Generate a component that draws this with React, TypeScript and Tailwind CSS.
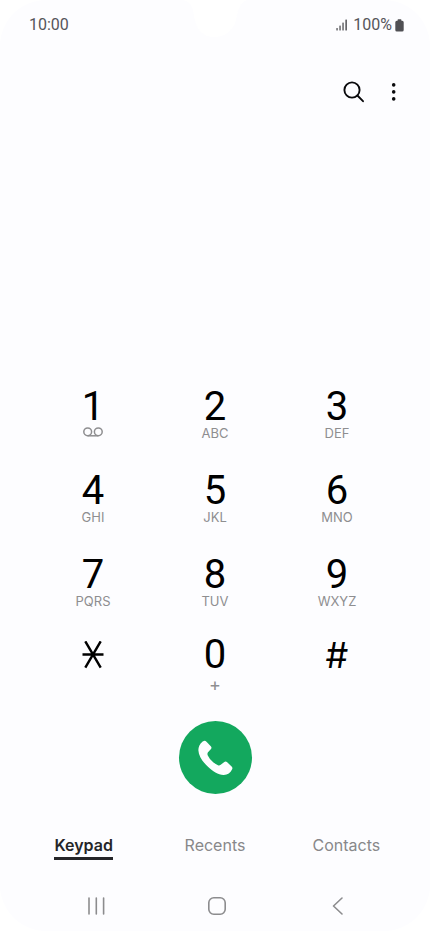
import React, { useState } from 'react';

interface DialKey {
  value: string;
  label: string;
}

const dialKeys: DialKey[] = [
  { value: '1', label: 'voicemail' },
  { value: '2', label: 'ABC' },
  { value: '3', label: 'DEF' },
  { value: '4', label: 'GHI' },
  { value: '5', label: 'JKL' },
  { value: '6', label: 'MNO' },
  { value: '7', label: 'PQRS' },
  { value: '8', label: 'TUV' },
  { value: '9', label: 'WXYZ' },
];

const tabs = ['Keypad', 'Recents', 'Contacts'];

function VoicemailIcon() {
  return (
    <svg viewBox="0 0 20 12" className="w-5 h-3" fill="none" stroke="#8e8e90" strokeWidth="1.5">
      <circle cx="4.7" cy="4.8" r="3.9" />
      <circle cx="15.3" cy="4.8" r="3.9" />
      <path d="M4.7 8.8h10.6" />
    </svg>
  );
}

function StatusBar() {
  return (
    <div className="flex items-center justify-between h-[50px] pl-[29px] pr-[26px] font-['Roboto',sans-serif] text-base text-[#55555a]">
      <span>10:00</span>
      <div className="flex items-center">
        <svg viewBox="0 0 12 12" className="w-3 h-3 mr-[5px]" fill="#66666a">
          <rect x="0.3" y="9" width="1.5" height="2.6" rx="0.5" />
          <rect x="3.3" y="6.6" width="1.5" height="5" rx="0.5" />
          <rect x="6.3" y="3.6" width="1.5" height="8" rx="0.5" />
          <rect x="9.3" y="0.4" width="1.7" height="11.2" rx="0.5" />
        </svg>
        <span>100%</span>
        <svg viewBox="0 0 9 13" className="w-[9px] h-[13px] ml-[3px]" fill="#505054">
          <path d="M2.6 0.9Q2.6 0.3 3.2 0.3h2.6q0.6 0 0.6 0.6v0.8h0.8q1.5 0 1.5 1.5v7.8q0 1.6-1.6 1.6H1.9Q0.3 12.6 0.3 11V3.2q0-1.5 1.5-1.5h0.8z" />
        </svg>
      </div>
    </div>
  );
}

// Cutout for the front camera
function Notch() {
  return (
    <svg viewBox="0 0 64 38" className="absolute top-0 left-1/2 -translate-x-1/2 w-16 h-[38px]" fill="#ffffff">
      <path d="M0 0C9 2 10 9 11 16C13 30 20 37 31 37C42 37 50 31 53 20C55 11 56 3 64 0Z" />
    </svg>
  );
}

export default function App() {
  const [activeTab, setActiveTab] = useState('Keypad');

  return (
    <div className="min-h-screen flex flex-col bg-white font-['Inter',sans-serif]">
      <div className="relative flex-1 flex flex-col bg-[#fdfdff] rounded-[46px] overflow-hidden">
        <Notch />
        <StatusBar />

        {/* Actions */}
        <div className="flex justify-end items-center gap-4 pr-6 pt-[30px]">
          <button aria-label="Search" className="w-6 h-6">
            <svg viewBox="0 0 24 24" className="w-6 h-6" fill="none" stroke="#0a0a0c" strokeWidth="1.9" strokeLinecap="round">
              <circle cx="10" cy="10" r="7.6" />
              <path d="M15.4 15.5L21 21.2" />
            </svg>
          </button>
          <button aria-label="More options" className="w-6 h-6">
            <svg viewBox="0 0 24 24" className="w-6 h-6" fill="#0a0a0c">
              <circle cx="11.7" cy="4.9" r="1.8" />
              <circle cx="11.7" cy="11.9" r="1.8" />
              <circle cx="11.7" cy="18.9" r="1.8" />
            </svg>
          </button>
        </div>

        {/* Keypad */}
        <div className="mt-auto px-8">
          <div className="grid grid-cols-3 gap-y-8">
            {dialKeys.map((key) => (
              <button key={key.value} className="flex flex-col items-center">
                <span className="font-['Roboto',sans-serif] text-[40px] leading-9 text-black">{key.value}</span>
                <span className="flex items-center h-4 text-[13px] leading-4 text-[#8e8e90]">
                  {key.label === 'voicemail' ? <VoicemailIcon /> : key.label}
                </span>
              </button>
            ))}
          </div>
          <div className="grid grid-cols-3 items-start mt-7">
            <button aria-label="Star" className="flex justify-center items-center h-9">
              <svg viewBox="0 0 22 28" className="w-[22px] h-7" fill="none" stroke="#000000" strokeWidth="2.4">
                <path d="M0.5 13.500h21M3.300 0.3L18.700 26.700M18.700 0.3L3.300 26.700" />
              </svg>
            </button>
            <button className="flex flex-col items-center gap-1">
              <span className="font-['Roboto',sans-serif] text-[40px] leading-9 text-black">0</span>
              <span className="text-lg leading-4 text-[#8e8e90]">+</span>
            </button>
            <button className="text-4xl leading-9 text-black">#</button>
          </div>
        </div>

        {/* Call */}
        <div className="flex justify-center mt-7">
          <button aria-label="Call" className="flex items-center justify-center w-[73px] h-[73px] rounded-full bg-[#13a85e]">
            <svg viewBox="0 0 36 36" className="w-9 h-9" fill="#fdfdff">
              <path d="M9.500 1.700L14 6.500Q15 7.800 14 9L11 12.300Q10 13.600 10.800 15.500Q12.300 19 16.200 22.200Q18.800 24.400 21 25.300Q22.500 25.800 23.700 24.800L27 22.200Q28.700 21 30.200 22.300L34.600 26.400Q36 27.800 35 29.600C33.500 33 30.500 35 26.500 34.900C21 34.600 16 31.500 10.200 26C5 21 1.600 15.500 1.400 10.500C1.300 6 3.800 2.600 6.200 1.200Q8 0.2 9.500 1.700Z" />
            </svg>
          </button>
        </div>

        {/* Tabs */}
        <nav className="grid grid-cols-3 px-[18px] mt-[38px]">
          {tabs.map((tab) => (
            <div key={tab} className="flex justify-center">
              <button
                onClick={() => setActiveTab(tab)}
                className={`h-7 border-b-3 text-base leading-[26px] flex items-start
                  ${activeTab === tab
                    ? 'border-[#252528] text-[#252528] font-semibold'
                    : 'border-transparent text-[#88888a]'
                  }`}
              >
                {tab}
              </button>
            </div>
          ))}
        </nav>

        {/* System navigation */}
        <div className="grid grid-cols-3 justify-items-center pl-[35px] pr-[30px] pt-[34px] pb-[13px]">
          <button aria-label="Recent apps" className="w-6 h-6">
            <svg viewBox="0 0 24 24" className="w-6 h-6" fill="none" stroke="#8c8c8e" strokeWidth="1.6" strokeLinecap="round">
              <path d="M5 4v16M12.300 4v16M19.600 4v16" />
            </svg>
          </button>
          <button aria-label="Home" className="w-6 h-6">
            <svg viewBox="0 0 24 24" className="w-6 h-6" fill="none" stroke="#8c8c8e" strokeWidth="1.6">
              <rect x="3.8" y="3.8" width="16.4" height="16.4" rx="5" />
            </svg>
          </button>
          <button aria-label="Back" className="w-6 h-6">
            <svg viewBox="0 0 24 24" className="w-6 h-6" fill="none" stroke="#8c8c8e" strokeWidth="1.6" strokeLinecap="round" strokeLinejoin="round">
              <path d="M15 4L6.500 12L15 20" />
            </svg>
          </button>
        </div>
      </div>
    </div>
  );
}
